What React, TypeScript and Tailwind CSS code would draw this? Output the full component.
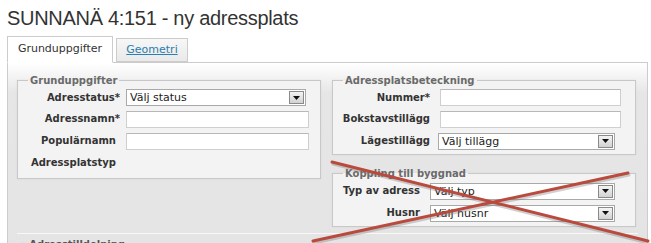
import React from "react";

/* ── small form controls ───────────────────────────────────────── */

function TextBox({ w }: { w: string }) {
  return <div className={`${w} h-[17px] bg-white border border-[#cfcfcf] border-t-[#b8b8b8]`} />;
}

function SelectBox({ w, text }: { w: string; text: string }) {
  return (
    <div className={`${w} h-[17px] bg-white border border-[#a9a9a9] flex items-center justify-between pl-[3px] pr-px`}>
      <span className="text-[11px] leading-none text-[#222]">{text}</span>
      <div className="w-[15px] h-[13px] border border-[#8a8a8a] bg-[linear-gradient(#f4f4f4,#d2d2d2)] flex items-center justify-center">
        <svg width="7" height="4" viewBox="0 0 7 4">
          <path d="M0 0h7L3.5 4z" fill="#111" />
        </svg>
      </div>
    </div>
  );
}

function Row({ label, lw, h, children }: { label: string; lw: string; h: string; children?: React.ReactNode }) {
  return (
    <div className={`flex items-center ${h}`}>
      <div className={`${lw} text-right text-[10px] font-bold text-[#333] leading-none`}>{label}</div>
      {children}
    </div>
  );
}

function Box({ title, className, children }: { title: string; className?: string; children: React.ReactNode }) {
  return (
    <fieldset className={`border border-[#c8c8c8] bg-[#f3f3f3] shadow-[0_0_2px_rgba(0,0,0,0.06)] ${className ?? ""}`}>
      <legend className="ml-[10px] px-[2px] text-[10px] font-bold text-[#6a6a6a] leading-[13px]">{title}</legend>
      {children}
    </fieldset>
  );
}

/* ── page ──────────────────────────────────────────────────────── */

export default function App() {
  return (
    <div className="relative w-[651px] h-[243px] overflow-hidden bg-white font-['DejaVu_Sans',Verdana,sans-serif]">
      <h1 className="pl-[7px] pt-[7px] text-[20px] leading-[23px] text-[#333] font-['Liberation_Sans',Arial,sans-serif] tracking-[-0.3px]">
        SUNNANÄ 4:151 - ny adressplats
      </h1>

      {/* tabs */}
      <div className="flex items-end gap-[3px] pl-[7px] mt-[6px] h-[26px]">
        <div className="relative z-10 -mb-px h-[27px] w-[106px] bg-white border border-[#cccccc] border-b-white flex items-center justify-center text-[11px] text-[#333]">
          Grunduppgifter
        </div>
        <div className="h-[24px] w-[72px] bg-[linear-gradient(#f7f7f7,#e9e9e9)] border border-[#cccccc] flex items-center justify-center text-[11px] text-[#2b7fae] underline">
          Geometri
        </div>
      </div>

      {/* panel */}
      <div className="ml-[7px] w-[641px] h-[200px] border border-[#cccccc] bg-[linear-gradient(#ffffff,#e6e6e6_30px,#e4e4e4)] px-[9px] pt-[11px]">
        <div className="flex gap-[11px] items-start">
          <Box title="Grunduppgifter" className="w-[304px] pb-[4px]">
            <Row label="Adresstatus*" lw="w-[102px]" h="h-[21px]">
              <div className="ml-[6px]"><SelectBox w="w-[180px]" text="Välj status" /></div>
            </Row>
            <Row label="Adressnamn*" lw="w-[102px]" h="h-[22px]">
              <div className="ml-[6px]"><TextBox w="w-[183px]" /></div>
            </Row>
            <Row label="Populärnamn" lw="w-[98px]" h="h-[22px]">
              <div className="ml-[10px]"><TextBox w="w-[183px]" /></div>
            </Row>
            <Row label="Adressplatstyp" lw="w-[98px]" h="h-[22px]" />
          </Box>

          <div className="flex flex-col w-[304px]">
            <Box title="Adressplatsbeteckning" className="pb-[2px]">
              <Row label="Nummer*" lw="w-[97px]" h="h-[21px]">
                <div className="ml-[10px]"><TextBox w="w-[181px]" /></div>
              </Row>
              <Row label="Bokstavstillägg" lw="w-[97px]" h="h-[22px]">
                <div className="ml-[10px]"><TextBox w="w-[181px]" /></div>
              </Row>
              <Row label="Lägestillägg" lw="w-[97px]" h="h-[22px]">
                <div className="ml-[8px]"><SelectBox w="w-[177px]" text="Välj tillägg" /></div>
              </Row>
            </Box>
            <Box title="Koppling till byggnad" className="mt-[12px] pb-[2px]">
              <Row label="Typ av adress" lw="w-[87px]" h="h-[22px]">
                <div className="ml-[10px]"><SelectBox w="w-[185px]" text="Välj typ" /></div>
              </Row>
              <Row label="Husnr" lw="w-[87px]" h="h-[22px]">
                <div className="ml-[10px]"><SelectBox w="w-[185px]" text="Välj husnr" /></div>
              </Row>
            </Box>
          </div>
        </div>

        <div className="mt-[6px] border-t border-[#f8f8f8] pt-[4px] pl-[2px] text-[10px] font-bold text-[#555] leading-[13px]">
          ▪ Adresstilldelning
        </div>
      </div>

      {/* red cross drawn over the building section */}
      <svg className="absolute left-0 top-0 pointer-events-none" width="651" height="243" viewBox="0 0 651 243">
        <g stroke="#7a7a7a" strokeWidth="3" opacity="0.35" strokeLinecap="round">
          <line x1="333" y1="164" x2="648" y2="243" />
          <line x1="314" y1="243" x2="629" y2="175" />
        </g>
        <g stroke="#b94a3e" strokeWidth="3" strokeLinecap="round">
          <line x1="332" y1="162" x2="648" y2="241" />
          <line x1="313" y1="241" x2="628" y2="173" />
        </g>
      </svg>
    </div>
  );
}
